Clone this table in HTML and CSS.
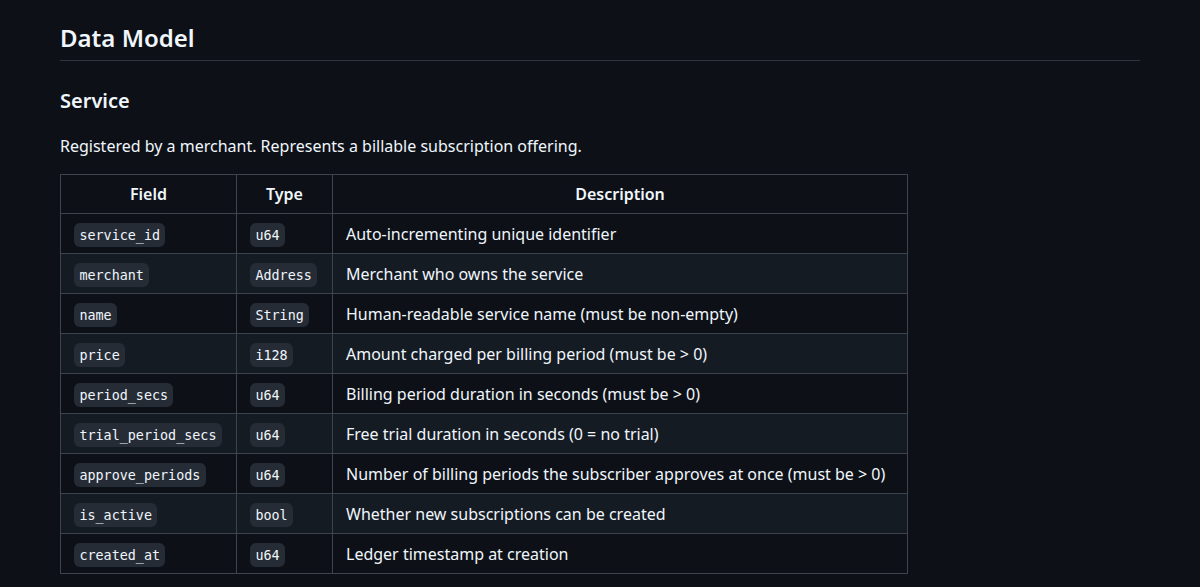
FILE: index.html
```html
<!DOCTYPE html>
<html lang="en">
<head>
<meta charset="utf-8">
<title>Data Model</title>
<link rel="stylesheet" href="styles.css">
</head>
<body>
<article class="markdown">
  <h2 class="h2">Data Model</h2>
  <h3 class="h3">Service</h3>
  <p class="para">Registered by a merchant. Represents a billable subscription offering.</p>
  <table class="tbl">
    <thead>
      <tr><th class="c-field">Field</th><th class="c-type">Type</th><th class="c-desc">Description</th></tr>
    </thead>
    <tbody>
      <tr><td><code>service_id</code></td><td><code>u64</code></td><td>Auto-incrementing unique identifier</td></tr>
      <tr><td><code>merchant</code></td><td><code>Address</code></td><td>Merchant who owns the service</td></tr>
      <tr><td><code>name</code></td><td><code>String</code></td><td>Human-readable service name (must be non-empty)</td></tr>
      <tr><td><code>price</code></td><td><code>i128</code></td><td>Amount charged per billing period (must be &gt; 0)</td></tr>
      <tr><td><code>period_secs</code></td><td><code>u64</code></td><td>Billing period duration in seconds (must be &gt; 0)</td></tr>
      <tr><td><code>trial_period_secs</code></td><td><code>u64</code></td><td>Free trial duration in seconds (0 = no trial)</td></tr>
      <tr><td><code>approve_periods</code></td><td><code>u64</code></td><td>Number of billing periods the subscriber approves at once (must be &gt; 0)</td></tr>
      <tr><td><code>is_active</code></td><td><code>bool</code></td><td>Whether new subscriptions can be created</td></tr>
      <tr><td><code>created_at</code></td><td><code>u64</code></td><td>Ledger timestamp at creation</td></tr>
    </tbody>
  </table>
</article>
</body>
</html>
```
FILE: styles.css
```css
html, body {
  margin: 0;
  padding: 0;
  background: #0d1117;
}
body {
  color: #f0f6fc;
  font-family: "Noto Sans", "Liberation Sans", sans-serif;
  font-size: 16px;
  line-height: 1.5;
}
.markdown {
  padding: 23px 60px 0 60px;
}
.h2 {
  margin: 0 0 27px 0;
  font-size: 24px;
  font-weight: 600;
  line-height: 1.25;
  padding-bottom: 7px;
  border-bottom: 1px solid #3d444db3;
}
.h3 {
  margin: 0 0 21px 0;
  font-size: 20px;
  font-weight: 600;
  line-height: 1.25;
}
.para {
  margin: 0 0 16px 0;
}
.tbl {
  border-collapse: collapse;
  border-spacing: 0;
}
.tbl th, .tbl td {
  border: 1px solid #3d444d;
  padding: 8px 13px 7px 13px;
}
.tbl th {
  font-weight: 600;
  text-align: center;
  padding: 7px 13px 7px 13px;
}
.tbl td {
  text-align: left;
  height: 24px;
}
.tbl tbody tr:nth-child(even) {
  background: #151b23;
}
.c-field { width: 149px; }
.c-type { width: 69px; }
.c-desc { width: 548px; }
code {
  font-family: "DejaVu Sans Mono", "Liberation Mono", monospace;
  font-size: 13.4px;
  line-height: 1;
  padding: 4.6px 5.4px 3.6px 5.4px;
  border-radius: 6px;
  background: #262c36;
  white-space: nowrap;
}
```
